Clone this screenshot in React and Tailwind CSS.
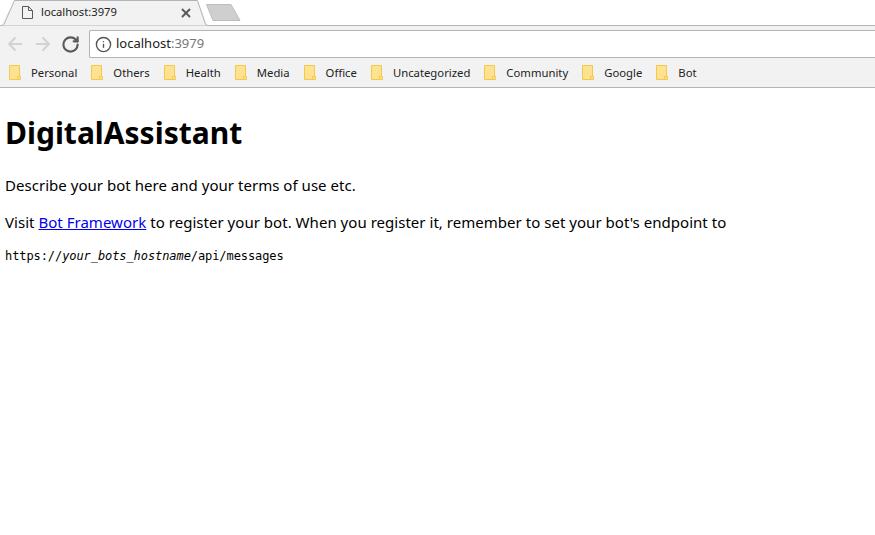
import React from 'react';
import { RotateCw, Info, X } from 'lucide-react';

const bookmarks = ['Personal', 'Others', 'Health', 'Media', 'Office', 'Uncategorized', 'Community', 'Google', 'Bot'];

const FolderIcon = () => (
  <svg width="12" height="15" viewBox="0 0 12 15" className="shrink-0">
    <path d="M0.5 0.5H10.5V14.5H0.5Z" fill="#fee28f" stroke="#f0c94f" />
    <path d="M8.5 11.5H11.5V14.5H8.5Z" fill="#fee28f" stroke="#f0c94f" />
  </svg>
);

const PageIcon = () => (
  <svg width="11" height="13" viewBox="0 0 11 13" fill="none" stroke="#5a5a5a">
    <path d="M0.5 0.5H6.5L10.5 4.500V12.500H0.5Z" />
    <path d="M6.5 0.5V4.500H10.5" />
  </svg>
);

const NavArrow = ({ flip }) => (
  <svg width="16" height="16" viewBox="0 0 16 16" fill="none" stroke="#d2d2d2" strokeWidth="2" className={flip ? 'rotate-180' : ''}>
    <path d="M15 8H2" />
    <path d="M8.500 1.500L2 8L8.500 14.500" />
  </svg>
);

const TabStrip = () => (
  <div className="relative h-[26px] bg-white border-b border-[#b4b4b4]">
    <svg width="245" height="26" viewBox="0 0 245 26" className="absolute left-0 top-0">
      <path d="M0 25.500H1L14.500 0.500H197.500L208 25.500H0Z" fill="#f2f2f2" />
      <path d="M0 25.500H1.500C3 25.500 4 24.500 4.500 23L14.500 0.500H197.500L205 23C205.500 24.500 206.500 25.500 208 25.500" fill="none" stroke="#b4b4b4" />
      <path d="M206.500 4.500H231L240 20.500H213Z" fill="#cfcfcf" stroke="#bdbdbd" strokeLinejoin="round" />
    </svg>
    <div className="relative flex items-center h-[25px] pl-[22px] pr-[2px] w-[195px]">
      <PageIcon />
      <span className="ml-[8px] text-[11.200px] text-[#222] font-['Noto_Sans',sans-serif]">localhost:3979</span>
      <X size={14} strokeWidth={3.200} className="ml-auto text-[#5a5a5a]" />
    </div>
  </div>
);

const Toolbar = () => (
  <div className="flex items-center h-[32px] bg-[#f2f2f2] pl-[7px]">
    <div className="flex items-center mt-[4px]">
      <NavArrow />
      <div className="ml-[12px]"><NavArrow flip /></div>
      <RotateCw size={19} strokeWidth={2.700} className="text-[#5a5a5a] ml-[10px]" />
    </div>
    <div className="flex flex-1 items-center self-end h-[28px] ml-[9px] bg-white border border-[#b4b4b4] border-r-0 rounded-l-[2px] pl-[5px]">
      <Info size={17} strokeWidth={2} className="text-[#555]" />
      <span className="ml-[4px] text-[13px] text-[#222] font-['Noto_Sans',sans-serif]">
        localhost<span className="text-[#777]">:3979</span>
      </span>
    </div>
  </div>
);

const BookmarkBar = () => (
  <div className="flex items-center h-[30px] pl-[9px] gap-[14px] bg-[#f2f2f2] border-b border-[#b4b4b4]">
    {bookmarks.map((b) => (
      <div key={b} className="flex items-center gap-[10px]">
        <FolderIcon />
        <span className="pt-[1px] text-[11.300px] text-[#222] font-['Noto_Sans',sans-serif]">{b}</span>
      </div>
    ))}
  </div>
);

export default function App() {
  return (
    <div className="h-[535px] w-[875px] overflow-hidden bg-white">
      <TabStrip />
      <Toolbar />
      <BookmarkBar />
      <div className="pt-[21px] pl-[5px] text-black text-[15px] tracking-[0.03px] font-['Noto_Sans',sans-serif]">
        <h1 className="text-[30px] leading-[48px] font-bold tracking-normal">DigitalAssistant</h1>
        <p className="mt-[16px] leading-[24px]">Describe your bot here and your terms of use etc.</p>
        <p className="mt-[13px] leading-[24px]">
          Visit <a href="#" className="text-[#0000ee] underline">Bot Framework</a> to register your bot. When you register it, remember to set your bot's endpoint to
        </p>
        <p className="mt-[14px] leading-[17px] text-[12px] tracking-[-0.08px] font-['DejaVu_Sans_Mono',monospace]">
          https://<em>your_bots_hostname</em>/api/messages
        </p>
      </div>
    </div>
  );
}
